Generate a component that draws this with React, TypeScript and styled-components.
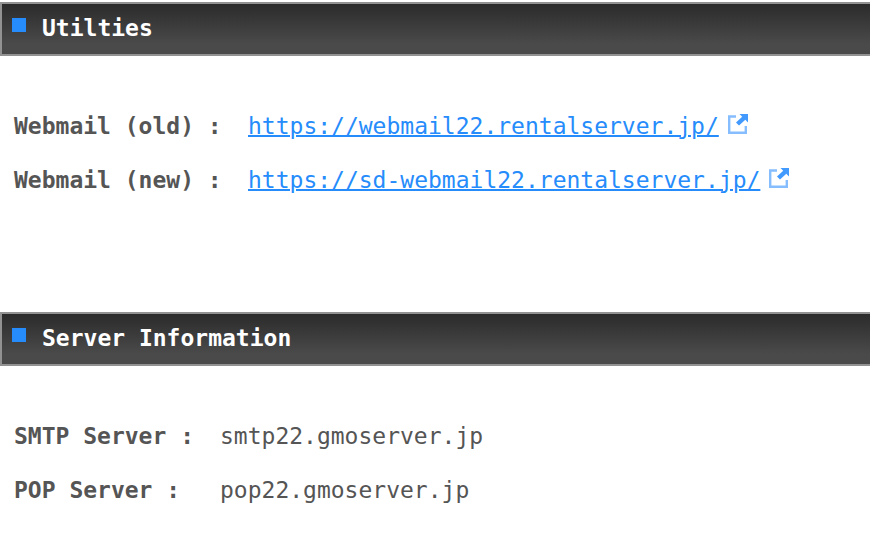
import React from "react";
import styled, { createGlobalStyle } from "styled-components";

const GlobalStyle = createGlobalStyle`
  * { box-sizing: border-box; }
  body {
    margin: 0;
    background: #fff;
    color: #555;
    font-family: "DejaVu Sans Mono", monospace;
    font-size: 23px;
    line-height: 54px;
  }
`;

const Page = styled.main`
  display: grid;
  gap: 105px;
  padding-top: 2px;
`;

const SectionHeader = styled.header`
  display: flex;
  align-items: center;
  height: 54px;
  padding-left: 10px;
  gap: 16px;
  border: 2px solid #929292;
  border-right: 0;
  background: linear-gradient(#2b2b2b, #4a4a4a 80%);
`;

const Marker = styled.span`
  width: 14px;
  height: 14px;
  margin-bottom: 8px;
  background: #268cfb;
`;

const Title = styled.h2`
  margin: 0;
  padding-bottom: 2px;
  color: #fff;
  font-size: 23px;
  font-weight: 700;
  line-height: 48px;
`;

const Details = styled.dl<{ $labelWidth: number }>`
  display: grid;
  grid-template-columns: ${(p) => p.$labelWidth}px 1fr;
  margin: 0;
  padding: 43px 14px 0;
  white-space: nowrap;
`;

const Label = styled.dt`
  font-weight: 700;
`;

const Value = styled.dd`
  margin: 0;
`;

const Link = styled.a`
  display: flex;
  gap: 8px;
  color: #268cfb;
  text-decoration: none;
`;

const Url = styled.span`
  text-decoration: underline;
  text-decoration-thickness: 2px;
`;

const Icon = styled.svg`
  flex: none;
  width: 22px;
  height: 22px;
  margin-top: 14px;
`;

function WebmailLink({ href }: { href: string }) {
  return (
    <Link href={href}>
      <Url>{href}</Url>
      <Icon viewBox="0 0 22 22" fill="none" aria-hidden="true">
        <path d="M9 3.5H2.2v16.3h16.6V13" stroke="#86bdff" strokeWidth="2.4" />
        <path d="M12.5 1H21v8.500l-2.700-2.700-6.300 5.800-3-3 6.200-5.900z" fill="#429aff" />
      </Icon>
    </Link>
  );
}

export default function App() {
  return (
    <Page>
      <GlobalStyle />
      <section>
        <SectionHeader><Marker /><Title>Utilties</Title></SectionHeader>
        <Details $labelWidth={234}>
          <Label>Webmail (old) :</Label>
          <Value><WebmailLink href="https://webmail22.rentalserver.jp/" /></Value>
          <Label>Webmail (new) :</Label>
          <Value><WebmailLink href="https://sd-webmail22.rentalserver.jp/" /></Value>
        </Details>
      </section>
      <section>
        <SectionHeader><Marker /><Title>Server Information</Title></SectionHeader>
        <Details $labelWidth={206}>
          <Label>SMTP Server :</Label>
          <Value>smtp22.gmoserver.jp</Value>
          <Label>POP Server :</Label>
          <Value>pop22.gmoserver.jp</Value>
        </Details>
      </section>
    </Page>
  );
}
